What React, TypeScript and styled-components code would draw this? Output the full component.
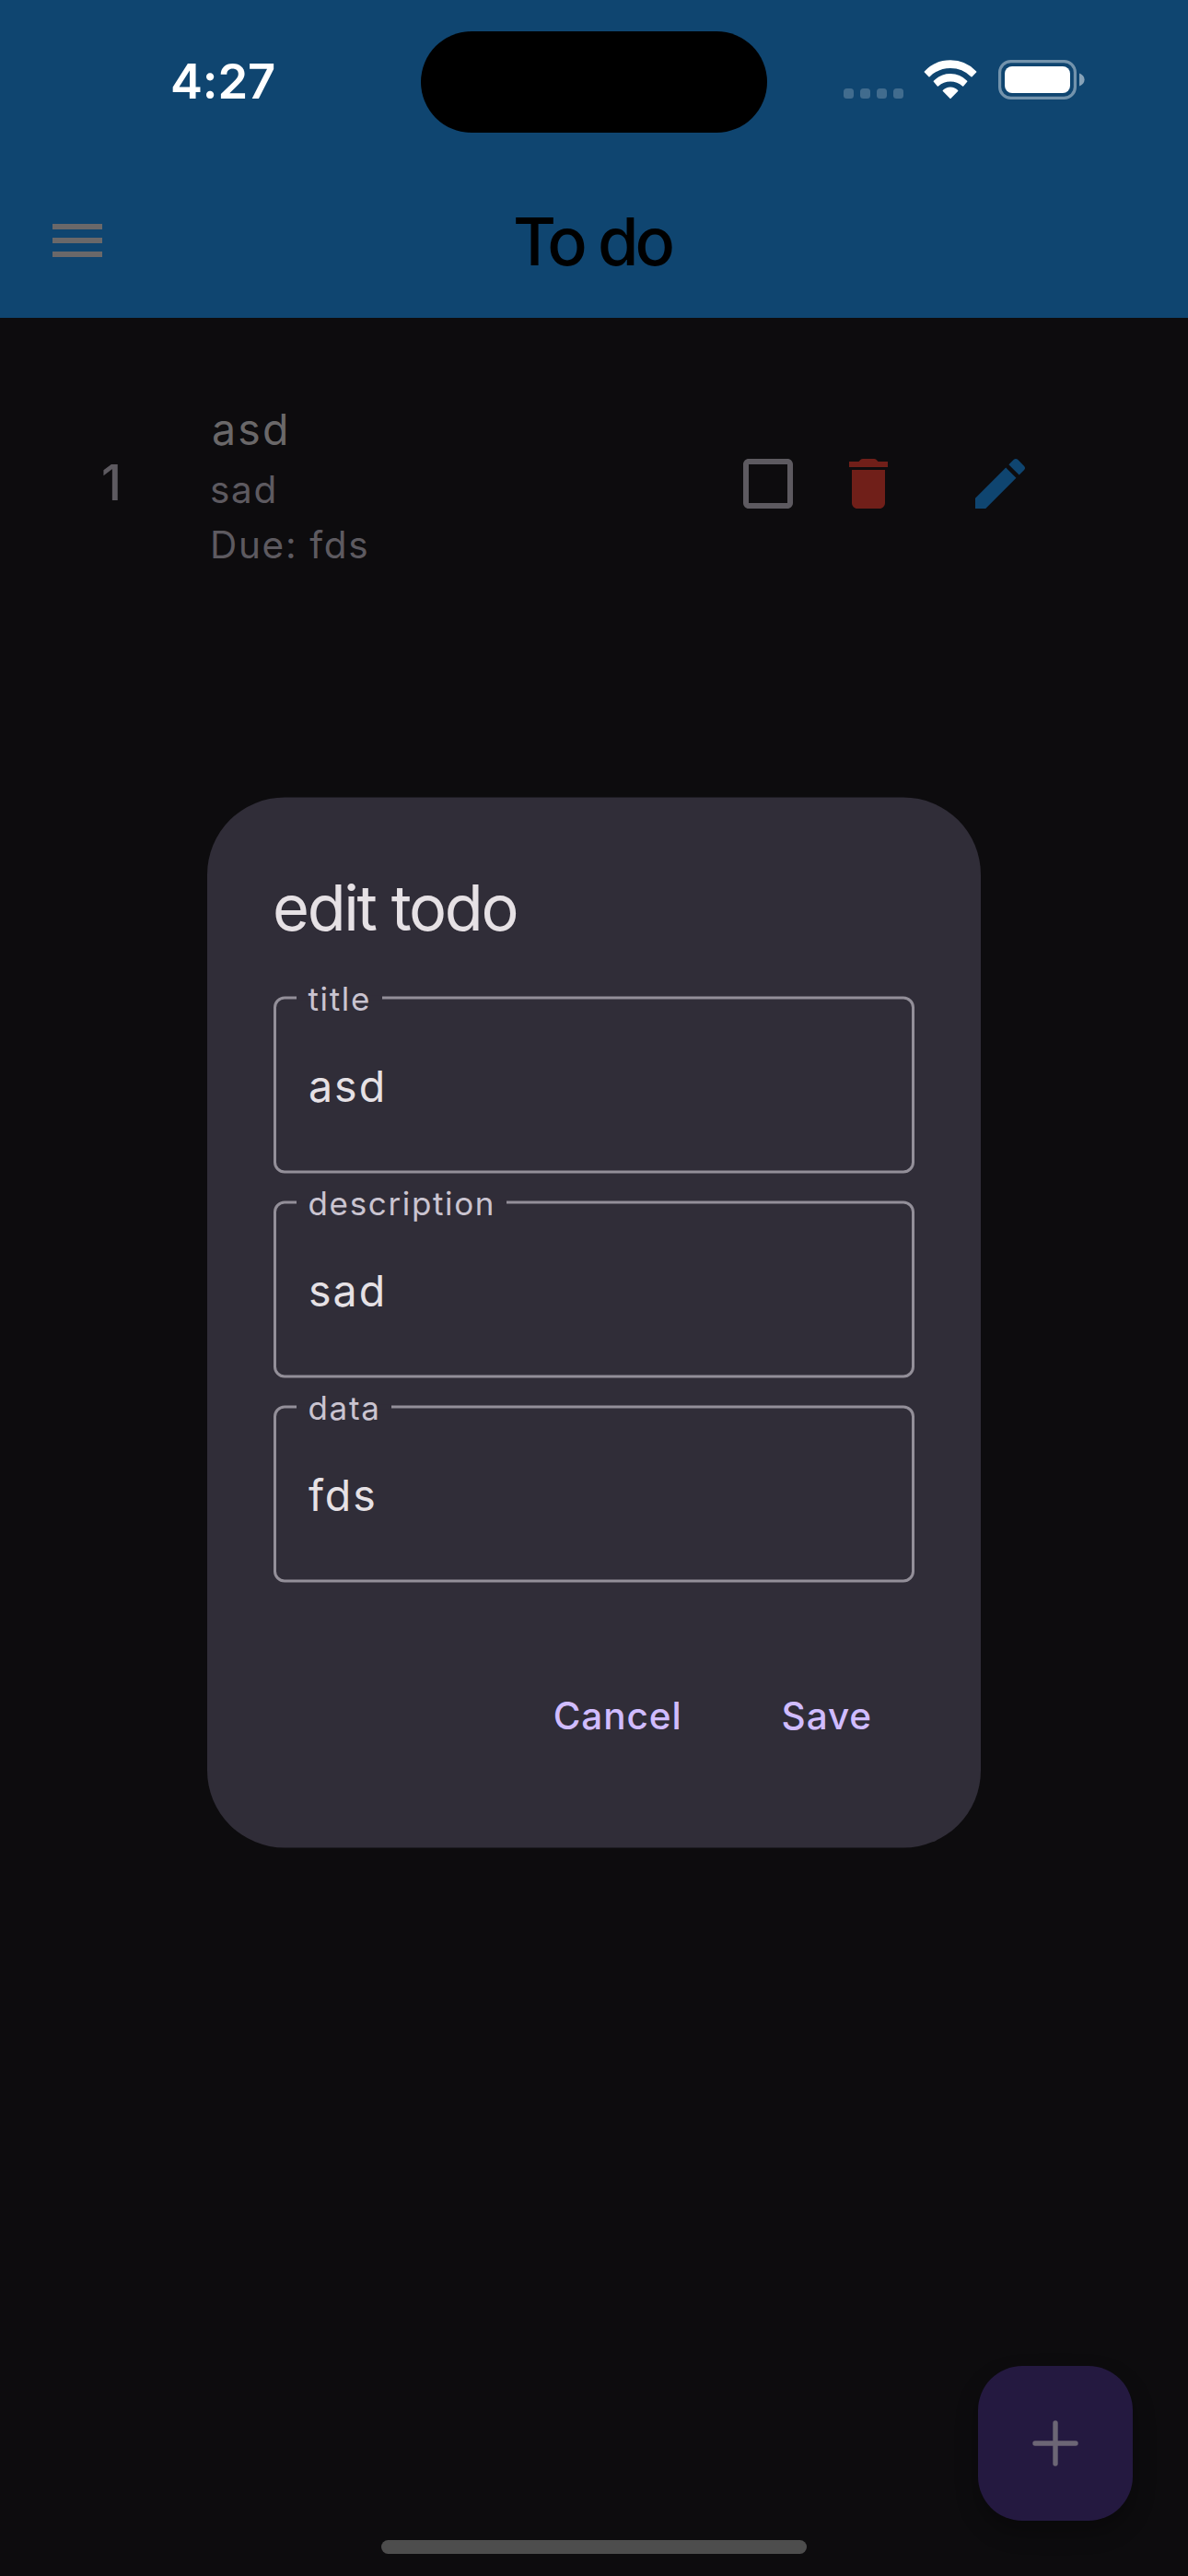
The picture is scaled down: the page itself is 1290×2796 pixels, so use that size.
import React from "react";
import styled, { createGlobalStyle } from "styled-components";

const GlobalStyle = createGlobalStyle`
  * { box-sizing: border-box; }
  html, body { margin: 0; padding: 0; background: #0d0c0e; }
  body { font-family: Inter, "Liberation Sans", sans-serif; }
  button { font-family: inherit; border: 0; background: none; padding: 0; margin: 0; }
`;

const Screen = styled.div`
  position: relative;
  width: 1290px;
  height: 2796px;
  display: flex;
  flex-direction: column;
  background: #0d0c0e;
  overflow: hidden;
`;

const Header = styled.header`
  height: 345px;
  background: #0f4570;
  display: flex;
  flex-direction: column;
`;

const StatusBar = styled.div`
  height: 177px;
  padding: 34px 112px 0 185px;
  display: grid;
  grid-template-columns: 272px 376px 1fr;
  align-items: start;
`;

const Clock = styled.div`
  font-size: 52.5px;
  font-weight: 600;
  line-height: 108px;
  color: #fff;
  letter-spacing: -0.1px;
`;

const Island = styled.div`
  height: 110px;
  border-radius: 55px;
  background: #000;
`;

const StatusIcons = styled.div`
  display: flex;
  justify-content: flex-end;
  align-items: flex-end;
  height: 74px;
`;

const SignalDots = styled.div`
  display: flex;
  gap: 7px;
  margin: 0 22px 1px 0;
`;

const SignalDot = styled.span`
  width: 11px;
  height: 11px;
  border-radius: 3.5px;
  background: rgba(255, 255, 255, 0.21);
`;

const WifiSvg = styled.svg`
  display: block;
  margin: 0 23px 0 0;
`;

const BatterySvg = styled.svg`
  display: block;
`;

const AppBar = styled.div`
  flex: 1;
  display: grid;
  grid-template-columns: 168px 1fr 168px;
  align-items: center;
`;

const MenuButton = styled.button`
  height: 72px;
  padding-left: 48px;
`;

const ScreenTitle = styled.h1`
  margin: 0;
  padding: 2px 4px 0 0;
  text-align: center;
  font-size: 72px;
  font-weight: 500;
  line-height: 90px;
  letter-spacing: -4px;
  color: #000;
`;

const Icon = styled.svg`
  display: block;
  width: 72px;
  height: 72px;
`;

const TodoRow = styled.div`
  margin-top: 81px;
  height: 198px;
  padding: 0 168px 0 110px;
  display: flex;
  align-items: center;
`;

const TodoIndex = styled.div`
  width: 118px;
  padding-bottom: 3px;
  font-size: 53px;
  font-weight: 500;
  line-height: 60px;
  color: #5d5a60;
`;

const TodoText = styled.div`
  flex: 1;
  display: flex;
  flex-direction: column;
`;

const TodoName = styled.div`
  font-size: 46.5px;
  line-height: 72px;
  letter-spacing: 2.2px;
  padding: 1px 0 0 2px;
  color: #6a6869;
`;

const TodoDetail = styled.div`
  font-size: 40.5px;
  line-height: 60px;
  letter-spacing: 1.7px;
  color: #5d5a60;
`;

const TodoActions = styled.div`
  display: flex;
  align-items: center;
`;

const IconButton = styled.button<{ $gap?: number }>`
  margin-left: ${(p) => p.$gap ?? 0}px;
`;

const Overlay = styled.div`
  position: absolute;
  inset: 0;
  display: flex;
  justify-content: center;
  align-items: flex-start;
  padding-top: 865px;
`;

const Dialog = styled.section`
  width: 840px;
  height: 1140px;
  padding: 72px;
  border-radius: 84px;
  background: #302d38;
  display: flex;
  flex-direction: column;
  transform: translateY(0.5px);
`;

const DialogTitle = styled.h2`
  margin: 0 0 48px -1px;
  font-size: 68.5px;
  font-weight: 400;
  line-height: 96px;
  letter-spacing: -2.3px;
  color: #e6e1e5;
`;

const Fields = styled.div`
  display: flex;
  flex-direction: column;
  gap: 30px;
`;

const Field = styled.fieldset`
  height: 193px;
  margin: -1px 0 0;
  min-width: 0;
  border: 3px solid #938f99;
  border-radius: 12px;
  padding: 0 0 0 22px;
`;

const FieldLabel = styled.legend`
  height: 5px;
  padding: 0 12px 0 12.5px;
  font-size: 35px;
  line-height: 7px;
  letter-spacing: 1.65px;
  color: #cac4d0;
  background: #302d38;
`;

const FieldValue = styled.div`
  padding: 0 0 0 13px;
  font-size: 46.5px;
  line-height: 186px;
  letter-spacing: 2px;
  color: #e6e1e5;
`;

const DialogActions = styled.div`
  margin-top: 72px;
  display: flex;
  justify-content: flex-end;
  gap: 16px;
`;

const TextButton = styled.button`
  height: 144px;
  padding: 0 46px;
  font-size: 40.5px;
  font-weight: 500;
  letter-spacing: 0.9px;
  color: #d0bcff;
`;

const Fab = styled.button`
  position: absolute;
  right: 60px;
  bottom: 60px;
  width: 168px;
  height: 168px;
  border-radius: 48px;
  background: #241940;
  display: flex;
  align-items: center;
  justify-content: center;
  box-shadow: 0 12px 24px rgba(0, 0, 0, 0.3);
`;

const HomeIndicator = styled.div`
  position: absolute;
  left: 414px;
  bottom: 24px;
  width: 462px;
  height: 15px;
  border-radius: 7.5px;
  background: #4d4d4d;
`;

const fields = [
  { label: "title", value: "asd" },
  { label: "description", value: "sad" },
  { label: "data", value: "fds" },
];

function Wifi() {
  return (
    <WifiSvg width="58" height="43" viewBox="0 0 58 43" fill="#fff" stroke="#fff" strokeWidth="1.6" strokeLinejoin="round">
      <path d="M1.400 13A38 38 0 0 1 56.600 13L52 17.700A32.500 32.500 0 0 0 6 17.700Z" transform="translate(0 0)" />
      <path d="M11.400 23.300A24.300 24.300 0 0 1 46.600 23.300L42.600 27.900A20.500 20.500 0 0 0 15.400 27.900Z" />
      <path d="M21.400 33.500A10.500 10.500 0 0 1 36.600 33.500L29 41.300Z" />
    </WifiSvg>
  );
}

function Battery() {
  return (
    <BatterySvg width="94" height="43" viewBox="0 0 94 43" fill="#fff">
      <rect x="1.600" y="1.600" width="81.800" height="39.800" rx="12" fill="none" stroke="#fff" strokeWidth="3.200" opacity="0.42" />
      <rect x="7" y="7" width="71" height="29" rx="8" />
      <path d="M88 14.500v14c3.400-1.300 5.600-4 5.600-7s-2.200-5.700-5.600-7z" opacity="0.5" />
    </BatterySvg>
  );
}

export default function App() {
  return (
    <Screen>
      <GlobalStyle />
      <Header>
        <StatusBar>
          <Clock>4:27</Clock>
          <Island />
          <StatusIcons>
            <SignalDots>
              {[0, 1, 2, 3].map((i) => (
                <SignalDot key={i} />
              ))}
            </SignalDots>
            <Wifi />
            <Battery />
          </StatusIcons>
        </StatusBar>
        <AppBar>
          <MenuButton aria-label="Menu">
            <Icon viewBox="0 0 24 24" fill="#6a6869">
              <path d="M3 18h18v-2H3v2zm0-5h18v-2H3v2zm0-7v2h18V6H3z" />
            </Icon>
          </MenuButton>
          <ScreenTitle>To do</ScreenTitle>
        </AppBar>
      </Header>

      <TodoRow>
        <TodoIndex>1</TodoIndex>
        <TodoText>
          <TodoName>asd</TodoName>
          <TodoDetail>sad</TodoDetail>
          <TodoDetail>Due: fds</TodoDetail>
        </TodoText>
        <TodoActions>
          <IconButton aria-label="Done">
            <Icon viewBox="0 0 24 24" fill="#5d5a60">
              <path d="M19 5v14H5V5h14m0-2H5c-1.100 0-2 .9-2 2v14c0 1.100.9 2 2 2h14c1.100 0 2-.9 2-2V5c0-1.100-.9-2-2-2z" />
            </Icon>
          </IconButton>
          <IconButton $gap={37} aria-label="Delete">
            <Icon viewBox="0 0 24 24" fill="#701f19">
              <path d="M6 19c0 1.100.9 2 2 2h8c1.100 0 2-.9 2-2V7H6v12zM19 4h-3.500l-.71-.71c-.18-.18-.44-.29-.7-.29H9.910c-.26 0-.52.110-.7.290L8.500 4H5v2h14V4z" />
            </Icon>
          </IconButton>
          <IconButton $gap={71} aria-label="Edit">
            <Icon viewBox="0 0 24 24" fill="#0f4570">
              <path d="M3 17.250V21h3.750L17.810 9.940l-3.750-3.750L3 17.250zM20.710 7.040c.39-.39.390-1.020 0-1.410l-2.340-2.340c-.39-.39-1.020-.39-1.410 0l-1.830 1.830 3.750 3.750 1.830-1.830z" />
            </Icon>
          </IconButton>
        </TodoActions>
      </TodoRow>

      <Fab aria-label="Add">
        <svg width="50" height="50" viewBox="0 0 50 50" stroke="#6c6675" strokeWidth="5.400" strokeLinecap="round">
          <path d="M25 3v44M3 25h44" />
        </svg>
      </Fab>

      <Overlay>
        <Dialog role="dialog">
          <DialogTitle>edit todo</DialogTitle>
          <Fields>
            {fields.map((f) => (
              <Field key={f.label}>
                <FieldLabel>{f.label}</FieldLabel>
                <FieldValue>{f.value}</FieldValue>
              </Field>
            ))}
          </Fields>
          <DialogActions>
            <TextButton>Cancel</TextButton>
            <TextButton>Save</TextButton>
          </DialogActions>
        </Dialog>
      </Overlay>

      <HomeIndicator />
    </Screen>
  );
}
